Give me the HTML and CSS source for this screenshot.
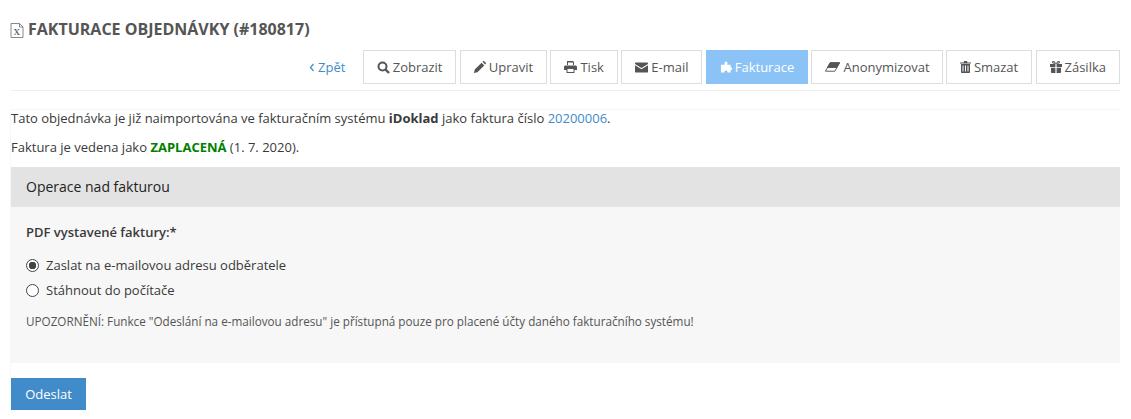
FILE: index.html
```html
<!DOCTYPE html>
<html lang="cs">
<head>
    <meta charset="UTF-8">
    <title>Fakturace objednávky</title>
    <link rel="stylesheet" href="styles.css">
</head>
<body>
    <div class="page">
        <h1 class="title">
            <svg class="title-icon" width="14" height="15" viewBox="0 0 14 15"><path d="M1 .5h8.500l3.500 3.500v10.500H1z M9.500.5V4H13" fill="#fff" stroke="#888"/><text x="3.500" y="12" class="title-x">x</text></svg>
            FAKTURACE OBJEDNÁVKY (#180817)
        </h1>
        <div class="toolbar">
            <a class="back" href="#">
                <svg width="6" height="9" viewBox="0 0 6 9"><path d="M4.500 1 1.500 4.500l3 3.500" fill="none" stroke="#428bca" stroke-width="1.200"/></svg>
                Zpět
            </a>
            <a class="btn" href="#">
                <svg class="ico" width="13" height="13" viewBox="0 0 13 13"><circle cx="5.500" cy="5.500" r="4" fill="none" stroke="#555" stroke-width="2"/><path d="m8.500 8.500 3.500 3.500" stroke="#555" stroke-width="2.400"/></svg>
                Zobrazit
            </a>
            <a class="btn" href="#">
                <svg class="ico" width="12" height="12" viewBox="0 0 12 12"><path d="M0 12l.7-3.400L7.600 1.700l2.700 2.700-6.900 6.900zM8.500.8 9.200.2c.3-.3.7-.3 1 0l1.600 1.600c.3.3.3.7 0 1l-.7.7z" fill="#555"/></svg>
                Upravit
            </a>
            <a class="btn" href="#">
                <svg class="ico" width="13" height="12" viewBox="0 0 13 12"><path d="M3 0h6l1 1v3H9V1.500H4V4H3zM1.500 4.500h10c.8 0 1.500.7 1.500 1.500v3h-2.500v3h-8V9H0V6c0-.8.7-1.500 1.500-1.500zM3.500 8v3h6V8z" fill="#555" fill-rule="evenodd"/></svg>
                Tisk
            </a>
            <a class="btn" href="#">
                <svg class="ico" width="13" height="11" viewBox="0 0 14 11"><path d="M1 0h12c.6 0 1 .4 1 1v.6L7 6 0 1.600V1c0-.6.4-1 1-1zM0 3.200 7 7.500l7-4.300V10c0 .6-.4 1-1 1H1c-.6 0-1-.4-1-1z" fill="#555"/></svg>
                E-mail
            </a>
            <a class="btn btn-active" href="#">
                <svg class="ico" width="12" height="12" viewBox="0 0 13 12"><path d="M5.300 3.500C4.400 1.500 5.200 0 6.500 0s2.100 1.500 1.200 3.500h3.800v3c.5-.3 1.500-.3 1.500 1.300S12 9.500 11.500 9v3H8c.3-.8.2-2.200-1.500-2.200S4.700 11.200 5 12H1V3.500z" fill="#fff"/></svg>
                Fakturace
            </a>
            <a class="btn btn-anon" href="#">
                <svg class="ico" width="15" height="10" viewBox="0 0 16 10"><path d="M5.500.5h10l-5 9H.5z" fill="#fff" stroke="#555"/><path d="M5.500.5h10l-2.800 5H2.700z" fill="#555" stroke="#555"/></svg>
                Anonymizovat
            </a>
            <a class="btn" href="#">
                <svg class="ico" width="11" height="12" viewBox="0 0 11 12"><path d="M3.500 1.500 4.200 0h2.600l.7 1.500H11v1H0v-1zM1 3h9v8c0 .6-.4 1-1 1H2c-.6 0-1-.4-1-1zm1.500 1.500V10.500h1V4.500zm2.500 0V10.500h1V4.500zm2.500 0V10.500h1V4.500z" fill="#555" fill-rule="evenodd"/></svg>
                Smazat
            </a>
            <a class="btn" href="#">
                <svg class="ico" width="12" height="12" viewBox="0 0 12 12"><path d="M6 3C5.500 1.200 4.600 0 3.300 0 2.600 0 2 .5 2 1.300 2 2.500 3.500 3 6 3c2.500 0 4-.5 4-1.700C10 .5 9.400 0 8.700 0 7.400 0 6.500 1.200 6 3zM3.400 1.200c.5 0 1 .4 1.200.8-1 0-1.500-.2-1.500-.6 0-.1.100-.2.300-.2zm5.200 0c.2 0 .3.100.3.200 0 .4-.5.600-1.500.6.200-.4.700-.8 1.200-.8z" fill="#555" fill-rule="evenodd"/><path d="M0 3h5.400v3H0zM6.600 3H12v3H6.600zM1 6.800h4.400V12H2c-.6 0-1-.4-1-1zM6.600 6.800H11V11c0 .6-.4 1-1 1H6.600z" fill="#555"/></svg>
                Zásilka
            </a>
        </div>

        <div class="content">
            <p class="line">Tato objednávka je již naimportována ve fakturačním systému <b>iDoklad</b> jako faktura číslo <a href="#">20200006</a>.</p>
            <p class="line">Faktura je vedena jako <b class="paid">ZAPLACENÁ</b> (1. 7. 2020).</p>

            <div class="panel">
                <div class="panel-head">Operace nad fakturou</div>
                <div class="panel-body">
                    <div class="field-label">PDF vystavené faktury:*</div>
                    <label class="radio"><input type="radio" name="pdf" checked> Zaslat na e-mailovou adresu odběratele</label>
                    <label class="radio"><input type="radio" name="pdf"> Stáhnout do počítače</label>
                    <p class="note">UPOZORNĚNÍ: Funkce "Odeslání na e-mailovou adresu" je přístupná pouze pro placené účty daného fakturačního systému!</p>
                </div>
            </div>

            <button class="submit">Odeslat</button>
        </div>
    </div>
</body>
</html>
```

FILE: styles.css
```css
html, body {
    height: 100%;
    overflow: hidden;
}
body {
    margin: 0;
    background: #fff;
    font-family: "Open Sans", sans-serif;
    font-size: 13px;
    color: #3a3a3a;
}
.page {
    padding: 0 11px;
}
.title {
    margin: 0 0 0 -1px;
    padding: 19px 0 11px;
    height: 20px;
    line-height: 20px;
    font-size: 16px;
    font-weight: 700;
    color: #555;
    display: flex;
    align-items: center;
    gap: 4px;
}
.title-icon {
    margin-top: 2px;
}
.title-x {
    font-family: "Liberation Serif", serif;
    font-size: 13px;
    font-weight: 400;
    fill: #555;
}
.toolbar {
    display: flex;
    justify-content: flex-end;
    align-items: center;
    gap: 3.3px;
    height: 34px;
    padding-bottom: 6px;
    border-bottom: 1px solid #eee;
}
.back {
    display: flex;
    align-items: center;
    gap: 3px;
    margin-right: 14px;
    color: #428bca;
    text-decoration: none;
}
.btn {
    display: flex;
    align-items: center;
    gap: 3px;
    box-sizing: border-box;
    height: 34px;
    padding: 0 13px;
    border: 1px solid #ddd;
    background: #fff;
    color: #555;
    text-decoration: none;
}
.btn-active {
    background: #8bc3f7;
    border-color: #8bc3f7;
    color: #fff;
}
.btn-anon {
    padding-right: 12px;
}
.content {
    margin: 18px 0 0 -1px;
    border-top: 1px solid #f7f7f7;
    border-left: 1px solid #f7f7f7;
}
.line {
    margin: 0;
    height: 28.5px;
    line-height: 16px;
}
.line a {
    color: #428bca;
    text-decoration: none;
}
.paid {
    color: #008000;
}
.panel {
    background: #f7f7f7;
}
.panel-head {
    height: 40px;
    line-height: 40px;
    padding-left: 15px;
    background: #e3e3e3;
    font-size: 14px;
    color: #222;
}
.panel-body {
    height: 156px;
    padding: 16px 15px 0;
    box-sizing: border-box;
}
.field-label {
    font-weight: 600;
    line-height: 18px;
    margin-bottom: 11px;
}
.radio {
    display: flex;
    align-items: center;
    gap: 7px;
    height: 25px;
}
.radio input {
    appearance: none;
    margin: 2px 0 0;
    width: 13px;
    height: 13px;
    border: 1px solid #444;
    border-radius: 50%;
    background: #fff;
}
.radio input:checked {
    background: radial-gradient(circle, #444 0 3.5px, #fff 4px);
}
.note {
    margin: 11px 0 0;
    font-size: 11.7px;
    line-height: 16px;
    color: #555;
}
.submit {
    display: block;
    margin-top: 15px;
    width: 75px;
    height: 32px;
    border: 0;
    background: #428bca;
    color: #fff;
    font-family: inherit;
    font-size: 13px;
}
```
